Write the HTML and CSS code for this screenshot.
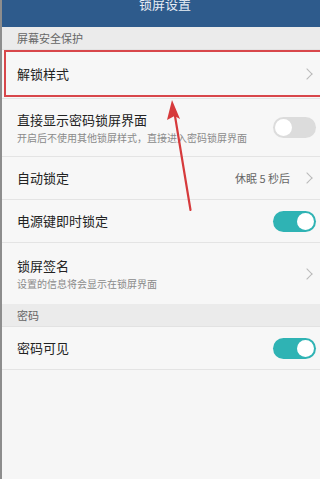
FILE: index.html
```html
<!DOCTYPE html>
<html>
<head>
<meta charset="utf-8">
<link rel="stylesheet" href="styles.css">
</head>
<body>
<div class="screen">
  <header class="topbar"><span class="title">锁屏设置</span></header>
  <div class="section">屏幕安全保护</div>
  <div class="row row-main highlight">
    <span class="label">解锁样式</span>
    <span class="chev"></span>
  </div>
  <div class="row row-tall">
    <div class="texts">
      <span class="label">直接显示密码锁屏界面</span>
      <span class="sub">开启后不使用其他锁屏样式，直接进入密码锁屏界面</span>
    </div>
    <span class="switch"></span>
  </div>
  <div class="row">
    <span class="label">自动锁定</span>
    <span class="right"><span class="value">休眠 5 秒后</span><span class="chev"></span></span>
  </div>
  <div class="row">
    <span class="label">电源键即时锁定</span>
    <span class="switch on"></span>
  </div>
  <div class="row row-tall last">
    <div class="texts">
      <span class="label">锁屏签名</span>
      <span class="sub">设置的信息将会显示在锁屏界面</span>
    </div>
    <span class="chev"></span>
  </div>
  <div class="section">密码</div>
  <div class="row">
    <span class="label">密码可见</span>
    <span class="switch on"></span>
  </div>
  <svg class="arrow" width="320" height="479" viewBox="0 0 320 479">
    <line x1="174.5" y1="113" x2="190.5" y2="210" stroke="#d63a3c" stroke-width="2.2" stroke-linecap="round"/>
    <polygon points="172,100 180,119 174.5,116 167,120" fill="#d63a3c"/>
  </svg>
</div>
</body>
</html>
```
FILE: styles.css
```css
* { box-sizing: border-box; }
html, body { margin: 0; padding: 0; }
body {
  width: 320px;
  height: 479px;
  overflow: hidden;
  background: #f6f6f6;
  font-family: "Noto Sans CJK SC", "Noto Sans", sans-serif;
  color: #222;
}
.screen {
  position: relative;
  width: 320px;
  height: 479px;
  background: #f6f6f6;
  border-left: 2px solid #8d8d8d;
}
.topbar {
  height: 27px;
  background: #2e5b8c;
  display: flex;
  justify-content: center;
  align-items: flex-start;
  overflow: hidden;
}
.title {
  color: #e8eef5;
  font-size: 13px;
  line-height: 13px;
  margin-top: -3px;
  margin-left: 8px;
}
.section {
  height: 23px;
  background: #ebebeb;
  font-size: 11px;
  color: #666;
  display: flex;
  align-items: center;
  padding-left: 15px;
  border-bottom: 1px solid #e2e2e2;
}
.section + .row { border-top: none; }
.row {
  height: 43px;
  display: flex;
  align-items: center;
  justify-content: space-between;
  padding-left: 15px;
  padding-right: 4px;
  border-bottom: 1px solid #e4e4e4;
  background: #f7f7f7;
}
.row-main { height: 49px; }
.row-tall { height: 58px; }
.row-tall.last { height: 61px; border-bottom: none; }
.highlight {
  position: relative;
}
.highlight::after {
  content: "";
  position: absolute;
  left: 2px;
  right: -2px;
  top: 0;
  bottom: 1px;
  border: 2px solid #d8474b;
  pointer-events: none;
}
.label { font-size: 13px; color: #222; line-height: 16px; }
.texts { display: flex; flex-direction: column; gap: 3px; }
.sub { font-size: 10px; color: #8a8a8a; line-height: 13px; }
.right { display: flex; align-items: center; gap: 13px; }
.value { font-size: 11px; color: #666; }
.chev {
  width: 8px;
  height: 8px;
  border-top: 1px solid #b9b9b9;
  border-right: 1px solid #b9b9b9;
  transform: rotate(45deg);
  margin-right: 5px;
}
.switch {
  position: relative;
  width: 43px;
  height: 21px;
  border-radius: 11px;
  background: #dcdcdc;
  margin-right: 0;
}
.switch::after {
  content: "";
  position: absolute;
  top: 2px;
  left: 2px;
  width: 17px;
  height: 17px;
  border-radius: 50%;
  background: #fff;
}
.switch.on { background: #2fb3b4; }
.switch.on::after { left: auto; right: 2px; }
.arrow {
  position: absolute;
  left: -2px;
  top: 0;
  pointer-events: none;
}
```
